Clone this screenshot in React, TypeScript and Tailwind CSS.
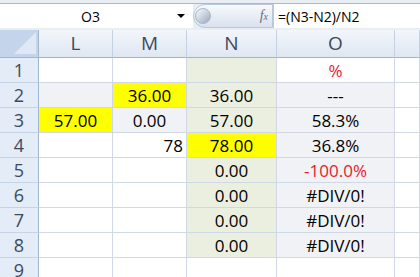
import React from 'react'

type Cell = {
  v?: string
  bg?: string
  align?: 'center' | 'right'
  red?: boolean
}

const font = { fontFamily: '"Open Sans", "Liberation Sans", sans-serif' }

const W = ''
const GR = 'bg-[#f0f2f5]'
const GN = 'bg-[#ebefdf]'
const YL = 'bg-[#ffff00]'

// rows 1..9, columns L M N O P
const rows: Cell[][] = [
  [{ bg: W }, { bg: W }, { bg: GN }, { v: '%', bg: W, red: true }, {}],
  [{ bg: GR }, { v: '36.00', bg: YL }, { v: '36.00', bg: GN }, { v: '---', bg: GR }, {}],
  [{ v: '57.00', bg: YL }, { v: '0.00', bg: GR }, { v: '57.00', bg: GN }, { v: '58.3%', bg: GR }, {}],
  [{}, { v: '78', align: 'right' }, { v: '78.00', bg: YL }, { v: '36.8%', bg: GR }, {}],
  [{}, {}, { v: '0.00', bg: GN }, { v: '-100.0%', bg: GR, red: true }, {}],
  [{}, {}, { v: '0.00', bg: GN }, { v: '#DIV/0!', bg: GR }, {}],
  [{}, {}, { v: '0.00', bg: GN }, { v: '#DIV/0!', bg: GR }, {}],
  [{}, {}, { v: '0.00', bg: GN }, { v: '#DIV/0!', bg: GR }, {}],
  [{}, {}, {}, {}, {}],
]

const cols = ['L', 'M', 'N', 'O', '']

function FormulaBar() {
  return (
    <div className="h-[30px] bg-[#e9eef5] border-t-[3px] border-[#e9eef5] flex flex-col">
      <div className="h-[1px] bg-[#a7bad3]" />
      <div className="flex h-[24px] items-stretch">
        <div className="w-[193px] bg-white flex items-center relative">
          <span className="flex-1 text-center text-[14px] text-black pl-[4px]" style={font}>O3</span>
          <span className="w-0 h-0 mr-[8px] border-l-[4px] border-r-[4px] border-t-[4px] border-l-transparent border-r-transparent border-t-black" />
        </div>
        <div className="w-[80px] rounded-l-full bg-gradient-to-b from-[#f7f9fc] to-[#d9e2ee] border border-[#b9c8da] flex items-center justify-between pr-[4px]">
          <span className="w-[16px] h-[16px] ml-[1px] rounded-full bg-gradient-to-br from-[#fbfcfe] via-[#c9d3df] to-[#9aa9bb] border border-[#a8b6c7]" />
          <span className="text-[#6b6f7a] italic text-[14px] leading-none" style={{ fontFamily: '"Liberation Serif", serif' }}>
            f<span className="text-[10px]">x</span>
          </span>
        </div>
        <div className="flex-1 bg-white border-l border-[#b9c8da] flex items-center pl-[4px]">
          <span className="text-[14px] text-black" style={font}>=(N3-N2)/N2</span>
        </div>
      </div>
      <div className="flex-1 bg-[#e9eef5]" />
    </div>
  )
}

function Corner() {
  return (
    <div className="h-[28px] bg-[#c4d5eb] border-r border-b border-[#9eb6ce] relative">
      <svg className="absolute right-[2px] bottom-[3px]" width="22" height="22" viewBox="0 0 22 22">
        <polygon points="22,0 22,22 0,22" fill="#dfe8f4" />
      </svg>
    </div>
  )
}

export default function App() {
  return (
    <div className="w-[420px] h-[277px] bg-white overflow-hidden" style={font}>
      <FormulaBar />
      <div className="grid grid-cols-[39px_74px_74px_90px_118px_25px]">
        <Corner />
        {cols.map((c, i) => (
          <div
            key={i}
            className="h-[28px] bg-gradient-to-b from-[#f3f6fb] to-[#dfe7f2] border-r border-b border-r-[#c5d1e0] border-b-[#9eb6ce] flex items-center justify-center text-[19px] text-[#3b4a5c]"
          >
            {c}
          </div>
        ))}
        {rows.map((r, ri) => (
          <React.Fragment key={ri}>
            <div className="h-[25px] bg-[#e4ecf7] border-r border-b border-r-[#9eb6ce] border-b-[#c5d3e4] flex items-center justify-center text-[18px] text-[#3b4a5c]">
              {ri + 1}
            </div>
            {r.map((c, ci) => (
              <div
                key={ci}
                className={`h-[25px] border-r border-b border-[#d0d7e5] flex items-center px-[3px] text-[17px] leading-none ${
                  c.bg || 'bg-white'
                } ${c.align === 'right' ? 'justify-end' : 'justify-center'} ${
                  c.red ? 'text-[#e8192c]' : 'text-black'
                }`}
              >
                {c.v}
              </div>
            ))}
          </React.Fragment>
        ))}
      </div>
    </div>
  )
}
